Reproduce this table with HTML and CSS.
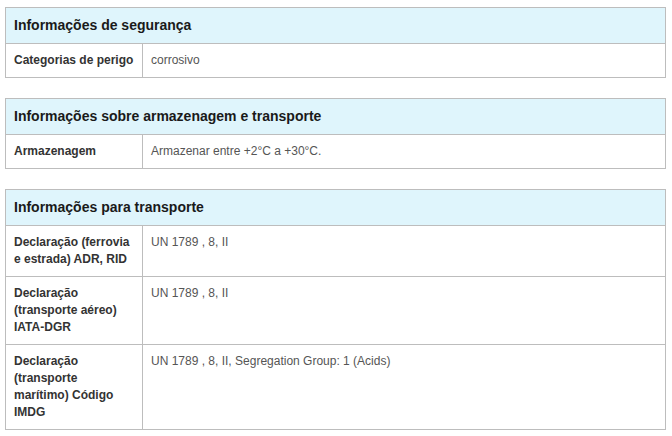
FILE: index.html
```html
<!DOCTYPE html>
<html lang="pt">
<head>
<meta charset="utf-8">
<title>Informações</title>
<link rel="stylesheet" href="styles.css">
</head>
<body>
<div class="page">
  <table class="info">
    <colgroup><col class="col-label"><col class="col-value"></colgroup>
    <thead><tr><th colspan="2">Informações de segurança</th></tr></thead>
    <tbody>
      <tr><td class="label">Categorias de perigo</td><td class="value">corrosivo</td></tr>
    </tbody>
  </table>
  <table class="info">
    <colgroup><col class="col-label"><col class="col-value"></colgroup>
    <thead><tr><th colspan="2">Informações sobre armazenagem e transporte</th></tr></thead>
    <tbody>
      <tr><td class="label">Armazenagem</td><td class="value">Armazenar entre +2°C a +30°C.</td></tr>
    </tbody>
  </table>
  <table class="info">
    <colgroup><col class="col-label"><col class="col-value"></colgroup>
    <thead><tr><th colspan="2">Informações para transporte</th></tr></thead>
    <tbody>
      <tr><td class="label">Declaração (ferrovia e estrada) ADR, RID</td><td class="value">UN 1789 , 8, II</td></tr>
      <tr><td class="label">Declaração (transporte aéreo) IATA-DGR</td><td class="value">UN 1789 , 8, II</td></tr>
      <tr><td class="label">Declaração (transporte marítimo) Código IMDG</td><td class="value">UN 1789 , 8, II, Segregation Group: 1 (Acids)</td></tr>
    </tbody>
  </table>
</div>
</body>
</html>
```

FILE: styles.css
```css
html, body {
  margin: 0;
  padding: 0;
  background: #ffffff;
}
.page {
  padding: 7px 0 0 5px;
  display: flex;
  flex-direction: column;
  gap: 20px;
  font-family: "Liberation Sans", Arial, sans-serif;
}
.info {
  width: 661px;
  border-collapse: collapse;
  table-layout: fixed;
}
.col-label {
  width: 137px;
}
.info th {
  background: #dff5fc;
  border: 1px solid #bdbdbd;
  text-align: left;
  font-size: 14px;
  font-weight: bold;
  line-height: 17px;
  color: #1a1a1a;
  padding: 9px 8px 9px 8px;
}
.info td {
  border: 1px solid #bdbdbd;
  font-size: 12px;
  line-height: 17px;
  padding: 8px 8px;
  vertical-align: top;
}
.info td.label {
  font-weight: bold;
  color: #333333;
}
.info td.value {
  color: #555555;
}
```
